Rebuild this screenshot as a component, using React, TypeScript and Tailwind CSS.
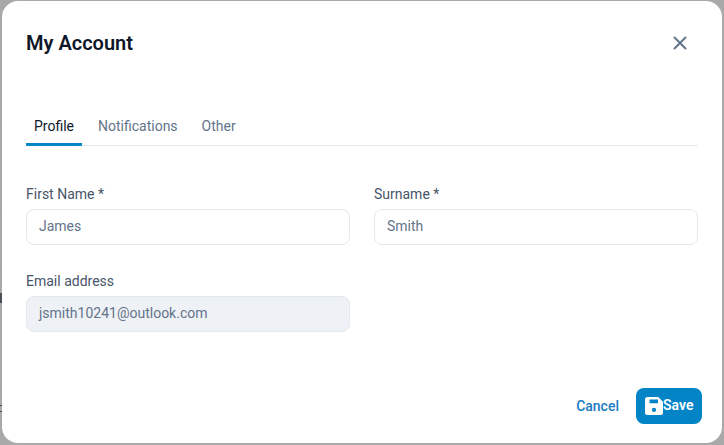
import React from "react";

function Field({ label, value, disabled }: { label: string; value: string; disabled?: boolean }) {
  return (
    <div className="flex flex-col gap-[5px]">
      <label className="text-sm leading-[20px] text-[#475569]">{label}</label>
      <div
        className={`h-[36px] flex items-center px-[12px] pb-[2px] rounded-lg border border-[#e2e8f0] text-sm text-[#64748b] ${disabled ? "bg-[#eef1f5]" : "bg-white"}`}
      >
        {value}
      </div>
    </div>
  );
}

export default function App() {
  return (
    <div className="relative w-[724px] h-[445px] overflow-hidden bg-[#a9a9a9] pt-[1px] pl-[2px] font-['Roboto',sans-serif]">
      <div className="absolute left-0 top-[121px] w-[2px] h-[1px] bg-[#a0a0a0]" />
      <div className="absolute left-0 top-[211px] w-[2px] h-[1px] bg-[#a0a0a0]" />
      <div className="absolute left-0 top-[265px] w-[2px] h-[1px] bg-[#a0a0a0]" />
      <div className="absolute left-0 top-[384px] w-[2px] h-[1px] bg-[#a0a0a0]" />
      <div className="absolute left-0 top-[293px] w-[2px] h-[10px] bg-[#4b4f58]" />
      <div className="absolute left-0 top-[405px] w-[2px] h-[1px] bg-[#4b4f58]" />
      <div className="absolute left-0 top-[411px] w-[2px] h-[1px] bg-[#4b4f58]" />
      <div className="relative w-[720px] h-[442px] bg-white rounded-2xl px-[24px] flex flex-col">
        <div className="h-[84px] flex items-center justify-between">
          <h1 className="text-xl font-semibold text-[#0f172a] leading-[28px]">My Account</h1>
          <svg width="20" height="20" viewBox="0 0 20 20" className="mr-[8px]" fill="none" stroke="#64748b" strokeWidth="2" strokeLinecap="round">
            <path d="M4.5 4.5 15.5 15.5M15.5 4.5 4.5 15.5" />
          </svg>
        </div>
        <div className="mt-[21px] flex gap-[8px] border-b border-[#e2e8f0] h-[40px] text-sm">
          <div className="px-[8px] h-[40px] leading-[40px] text-[#0f172a] border-b-[3px] border-[#0284c7] rounded-b-[1px]">Profile</div>
          <div className="px-[8px] h-[40px] leading-[40px] text-[#64748b]">Notifications</div>
          <div className="px-[8px] h-[40px] leading-[40px] text-[#64748b]">Other</div>
        </div>
        <div className="mt-[38px] grid grid-cols-2 gap-x-[24px] gap-y-[26px]">
          <Field label="First Name *" value="James" />
          <Field label="Surname *" value="Smith" />
          <Field label="Email address" value="jsmith10241@outlook.com" disabled />
        </div>
        <div className="mt-auto mb-[19px] flex justify-end items-center gap-[17px] mr-[-4px]">
          <button className="text-sm font-medium text-[#1a7cc2]">Cancel</button>
          <button className="h-[36px] w-[66px] rounded-lg bg-[#0284c7] text-white text-sm font-semibold flex items-center pl-[8px]">
            <svg width="20" height="20" viewBox="0 0 20 20" fill="white">
              <path fillRule="evenodd" d="M3.5 1h10.7L19 5.8v10.7a2.5 2.5 0 0 1-2.5 2.5h-13A2.5 2.5 0 0 1 1 16.5v-13A2.5 2.5 0 0 1 3.5 1ZM5.5 3.5v3.8h8.5V3.5H5.5Zm4.5 8.3a2.1 2.1 0 1 0 0 4.2 2.1 2.1 0 0 0 0-4.2Z" />
            </svg>
            <span className="-ml-[1px] -mt-[2px]">Save</span>
          </button>
        </div>
      </div>
    </div>
  );
}
